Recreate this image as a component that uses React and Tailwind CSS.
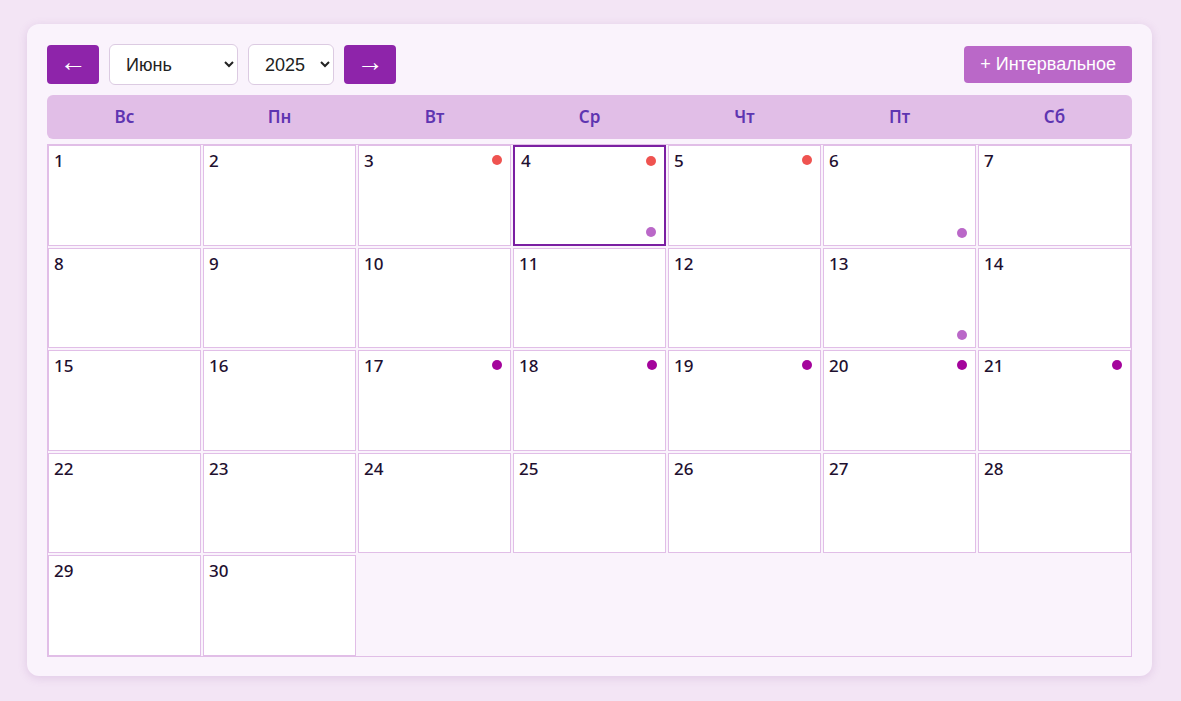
import React from 'react';

const MONTHS = ['Январь', 'Февраль', 'Март', 'Апрель', 'Май', 'Июнь', 'Июль', 'Август', 'Сентябрь', 'Октябрь', 'Ноябрь', 'Декабрь'];
const WEEKDAYS = ['Вс', 'Пн', 'Вт', 'Ср', 'Чт', 'Пт', 'Сб'];

// top dot / bottom dot per day
const topDots = { 3: 'bg-[#ef5350]', 4: 'bg-[#ef5350]', 5: 'bg-[#ef5350]', 17: 'bg-[#a4049c]', 18: 'bg-[#a4049c]', 19: 'bg-[#a4049c]', 20: 'bg-[#a4049c]', 21: 'bg-[#a4049c]' };
const bottomDots = { 4: 'bg-[#ba68c8]', 6: 'bg-[#ba68c8]', 13: 'bg-[#ba68c8]' };

const DayCell = ({ day, today }) => (
  <div
    className={`relative h-[100.5px] bg-white ${today ? 'border-2 border-[#7b1fa2] pl-[6px] pt-[2px]' : 'border border-[#e1bee7] pl-[5px] pt-[3px]'}`}
  >
    <span className="text-[17px] font-medium leading-[22px] text-[#1f1030]">{day}</span>
    {topDots[day] && <span className={`absolute top-[9px] right-[8px] w-2.5 h-2.5 rounded-full ${topDots[day]}`} />}
    {bottomDots[day] && <span className={`absolute bottom-[7px] right-[8px] w-2.5 h-2.5 rounded-full ${bottomDots[day]}`} />}
  </div>
);

export default function App() {
  const days = Array.from({ length: 30 }, (_, i) => i + 1);

  return (
    <div className="min-h-[701px] bg-[#f3e5f5] pl-[27px] pr-[29px] pt-[24px] pb-[25px]" style={{ fontFamily: '"Noto Sans", "Open Sans", sans-serif' }}>
      <div className="rounded-xl bg-[#faf3fc] px-5 pt-5 pb-[19px] shadow-[0_2px_10px_rgba(150,90,170,0.2)]">
        {/* Toolbar */}
        <div className="flex items-center gap-[10px]" style={{ fontFamily: '"Liberation Sans", Arial, sans-serif' }}>
          <button className="w-[52px] h-[39px] rounded bg-[#8e24aa] text-white text-[27px] leading-none pb-1">←</button>
          <select defaultValue="Июнь" className="w-[129px] h-[41px] rounded-md border border-[#dccbe2] bg-white pl-3 text-[18px] text-[#222]">
            {MONTHS.map((m) => <option key={m}>{m}</option>)}
          </select>
          <select defaultValue="2025" className="w-[86px] h-[41px] rounded-md border border-[#dccbe2] bg-white pl-3 text-[18px] text-[#222]">
            <option>2024</option>
            <option>2025</option>
            <option>2026</option>
          </select>
          <button className="w-[52px] h-[39px] rounded bg-[#8e24aa] text-white text-[27px] leading-none pb-1">→</button>
          <button className="ml-auto h-[37px] px-4 rounded bg-[#ba68c8] text-white text-[18px]">+ Интервальное</button>
        </div>

        {/* Weekday header */}
        <div className="mt-[10px] grid grid-cols-7 h-[44px] items-center rounded-md bg-[#e1bee7]">
          {WEEKDAYS.map((d) => (
            <div key={d} className="text-center text-[17px] font-semibold text-[#5e35b1]">{d}</div>
          ))}
        </div>

        {/* Day grid */}
        <div className="mt-[5px] grid grid-cols-7 gap-[2px] border border-[#e1bee7]">
          {days.map((d) => <DayCell key={d} day={d} today={d === 4} />)}
        </div>
      </div>
    </div>
  );
}
